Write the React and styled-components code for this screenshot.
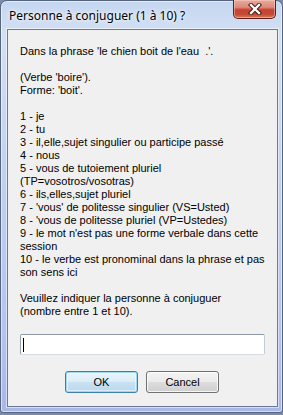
import React from "react";
import styled, { createGlobalStyle } from "styled-components";

const Global = createGlobalStyle`
  html, body { margin: 0; padding: 0; background: #7d8aa8; }
  body { width: 283px; height: 415px; overflow: hidden; }
`;

const Window = styled.div`
  box-sizing: border-box;
  width: 283px;
  height: 413px;
  display: flex;
  flex-direction: column;
  border: 1px solid #56657e;
  border-radius: 7px 7px 3px 3px;
  background: linear-gradient(180deg, #c4d6f0 0%, #d3e0f4 8%, #c2d1f0 40%, #b4c3ee 80%, #a9b7e9 100%);
  box-shadow: inset 0 0 0 1px rgba(255, 255, 255, 0.55);
  padding: 0 4px 5px 6px;
  font-family: "Liberation Sans", Arial, sans-serif;
`;

const TitleBar = styled.div`
  height: 28px;
  display: flex;
  align-items: flex-start;
`;

const Title = styled.div`
  margin-top: 7px;
  margin-left: 2px;
  font-family: "Noto Sans", "Open Sans", sans-serif;
  font-size: 12px;
  line-height: 16px;
  color: #000;
  text-shadow: 0 0 6px #fff, 0 0 3px #fff;
  white-space: nowrap;
`;

const CloseButton = styled.div`
  margin-left: auto;
  margin-right: 2px;
  margin-top: -1px;
  width: 43px;
  height: 19px;
  box-sizing: border-box;
  border: 1px solid #5e2019;
  border-top: none;
  border-radius: 0 0 5px 5px;
  background: linear-gradient(180deg, #e9a99b 0%, #dc8b7c 40%, #c8402f 55%, #c34b34 80%, #d77b5f 100%);
  box-shadow: inset 0 0 0 1px rgba(255, 220, 210, 0.45);
  display: flex;
  align-items: center;
  justify-content: center;
`;

const Client = styled.div`
  flex: 1;
  background: #f0f0f0;
  border: 1px solid #6c7a93;
  box-shadow: 0 0 0 1px rgba(255, 255, 255, 0.5);
  padding: 15px 12px 0 12px;
  display: flex;
  flex-direction: column;
`;

const Message = styled.div`
  font-size: 11px;
  line-height: 13px;
  color: #000;
  white-space: pre;
`;

const InputBox = styled.div`
  margin-top: 16px;
  height: 21px;
  box-sizing: border-box;
  border: 1px solid;
  border-color: #8e98a4 #c4cbd3 #d6dce2 #97a1ac;
  border-radius: 2px;
  background: #fff;
  display: flex;
  align-items: center;
  padding-left: 2px;
`;

const Caret = styled.span`
  width: 1px;
  height: 14px;
  background: #000;
`;

const ButtonRow = styled.div`
  margin-top: 16px;
  display: flex;
  justify-content: center;
  gap: 8px;
  padding-right: 1px;
`;

const Button = styled.div`
  width: 73px;
  height: 22px;
  box-sizing: border-box;
  border: 1px solid ${(p) => (p.$default ? "#3c7fb1" : "#707070")};
  border-radius: 3px;
  background: ${(p) =>
    p.$default
      ? "linear-gradient(180deg, #eaf5fc 0%, #dcecf7 48%, #c9e1f2 52%, #b9d8ee 100%)"
      : "linear-gradient(180deg, #f4f4f4 0%, #ebebeb 48%, #dddddd 52%, #cfcfcf 100%)"};
  box-shadow: ${(p) =>
    p.$default
      ? "inset 0 0 0 1px #9fd6f2, inset 0 0 0 2px rgba(255,255,255,0.5)"
      : "inset 0 0 0 1px rgba(255,255,255,0.8)"};
  display: flex;
  align-items: center;
  justify-content: center;
  font-size: 11px;
  color: #000;
`;

const text = `Dans la phrase 'le chien boit de l'eau  .'.

(Verbe 'boire').
Forme: 'boit'.

1 - je
2 - tu
3 - il,elle,sujet singulier ou participe passé
4 - nous
5 - vous de tutoiement pluriel
(TP=vosotros/vosotras)
6 - ils,elles,sujet pluriel
7 - 'vous' de politesse singulier (VS=Usted)
8 - 'vous de politesse pluriel (VP=Ustedes)
9 - le mot n'est pas une forme verbale dans cette
session
10 - le verbe est pronominal dans la phrase et pas
son sens ici

Veuillez indiquer la personne à conjuguer
(nombre entre 1 et 10).`;

export default function App() {
  return (
    <>
      <Global />
      <Window>
        <TitleBar>
          <Title>Personne à conjuguer (1 à 10) ?</Title>
          <CloseButton>
            <svg width="14" height="12" viewBox="0 0 14 12">
              <path d="M3 2 L11 10 M11 2 L3 10" stroke="#3a1410" strokeWidth="4.2" strokeLinecap="square" />
              <path d="M3 2 L11 10 M11 2 L3 10" stroke="#fff" strokeWidth="2.4" strokeLinecap="square" />
            </svg>
          </CloseButton>
        </TitleBar>
        <Client>
          <Message>{text}</Message>
          <InputBox>
            <Caret />
          </InputBox>
          <ButtonRow>
            <Button $default>OK</Button>
            <Button>Cancel</Button>
          </ButtonRow>
        </Client>
      </Window>
    </>
  );
}
